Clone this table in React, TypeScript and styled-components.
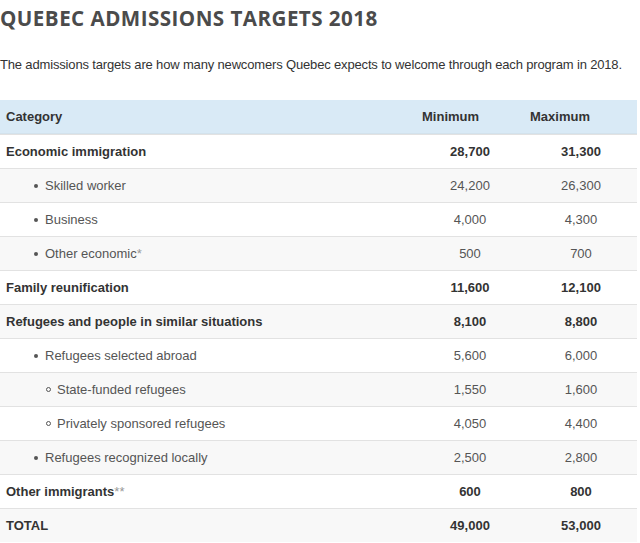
import React from "react";
import styled, { createGlobalStyle } from "styled-components";

const Global = createGlobalStyle`
  html, body { margin: 0; padding: 0; background: #fff; }
  body { font-family: "Liberation Sans", Arial, sans-serif; }
`;

const Page = styled.div`
  width: 640px;
  height: 543px;
  overflow: hidden;
  background: #fff;
`;

const Title = styled.h1`
  margin: 0;
  padding: 4px 0 0 0;
  height: 28px;
  font-family: "Open Sans", sans-serif;
  font-weight: 700;
  font-size: 20.6px;
  line-height: 28px;
  letter-spacing: 0.45px;
  color: #4b4b4b;
  white-space: nowrap;
`;

const Intro = styled.p`
  margin: 0;
  height: 68px;
  box-sizing: border-box;
  padding-top: 25px;
  font-size: 13px;
  line-height: 16px;
  letter-spacing: -0.16px;
  color: #333;
  white-space: nowrap;
`;

const Table = styled.div`
  width: 637px;
  display: grid;
  grid-template-columns: 413px 108px 116px;
`;

const HeadCell = styled.div<{ $num?: boolean }>`
  height: 34px;
  display: flex;
  align-items: center;
  padding-left: ${(p) => (p.$num ? "9px" : "6px")};
  background: #d9eaf6;
  font-weight: 700;
  font-size: 13px;
  color: #333;
  border-bottom: 1px solid #d3e2ec;
  box-sizing: border-box;
`;

const Cell = styled.div<{ $alt: boolean; $bold: boolean; $num?: boolean; $level?: number; $shift?: number }>`
  height: 34px;
  box-sizing: border-box;
  display: flex;
  align-items: center;
  justify-content: ${(p) => (p.$num ? "center" : "flex-start")};
  padding-left: ${(p) => (p.$num ? `${p.$shift ?? 0}px` : p.$level === 2 ? "46px" : p.$level === 1 ? "34px" : "6px")};
  background: ${(p) => (p.$alt ? "#f8f8f8" : "#fff")};
  border-top: 1px solid #e2e2e2;
  font-size: 13px;
  font-weight: ${(p) => (p.$bold ? 700 : 400)};
  color: ${(p) => (p.$bold ? "#333" : "#555")};
  white-space: nowrap;
`;

const Bullet = styled.span<{ $hollow?: boolean }>`
  display: inline-block;
  width: ${(p) => (p.$hollow ? "5px" : "4px")};
  height: ${(p) => (p.$hollow ? "5px" : "4px")};
  border-radius: 50%;
  box-sizing: border-box;
  margin-right: ${(p) => (p.$hollow ? "6px" : "7px")};
  background: ${(p) => (p.$hollow ? "transparent" : "#555")};
  border: ${(p) => (p.$hollow ? "1px solid #555" : "none")};
`;

const Note = styled.span`
  font-weight: 400;
  color: #999;
`;

type Row = { label: string; note?: string; min: string; max: string; level: 0 | 1 | 2 };

const rows: Row[] = [
  { label: "Economic immigration", min: "28,700", max: "31,300", level: 0 },
  { label: "Skilled worker", min: "24,200", max: "26,300", level: 1 },
  { label: "Business", min: "4,000", max: "4,300", level: 1 },
  { label: "Other economic", note: "*", min: "500", max: "700", level: 1 },
  { label: "Family reunification", min: "11,600", max: "12,100", level: 0 },
  { label: "Refugees and people in similar situations", min: "8,100", max: "8,800", level: 0 },
  { label: "Refugees selected abroad", min: "5,600", max: "6,000", level: 1 },
  { label: "State-funded refugees", min: "1,550", max: "1,600", level: 2 },
  { label: "Privately sponsored refugees", min: "4,050", max: "4,400", level: 2 },
  { label: "Refugees recognized locally", min: "2,500", max: "2,800", level: 1 },
  { label: "Other immigrants", note: "**", min: "600", max: "800", level: 0 },
  { label: "TOTAL", min: "49,000", max: "53,000", level: 0 },
];

export default function App() {
  return (
    <Page>
      <Global />
      <Title>QUEBEC ADMISSIONS TARGETS 2018</Title>
      <Intro>
        The admissions targets are how many newcomers Quebec expects to welcome through each program in 2018.
      </Intro>
      <Table>
        <HeadCell>Category</HeadCell>
        <HeadCell $num>Minimum</HeadCell>
        <HeadCell $num>Maximum</HeadCell>
        {rows.map((r, i) => {
          const alt = i % 2 === 1;
          const bold = r.level === 0;
          return (
            <React.Fragment key={r.label}>
              <Cell $alt={alt} $bold={bold} $level={r.level}>
                {r.level > 0 && <Bullet $hollow={r.level === 2} />}
                {r.label}
                {r.note && <Note>{r.note}</Note>}
              </Cell>
              <Cell $alt={alt} $bold={bold} $num $shift={6}>
                {r.min}
              </Cell>
              <Cell $alt={alt} $bold={bold} $num $shift={4}>
                {r.max}
              </Cell>
            </React.Fragment>
          );
        })}
      </Table>
    </Page>
  );
}
